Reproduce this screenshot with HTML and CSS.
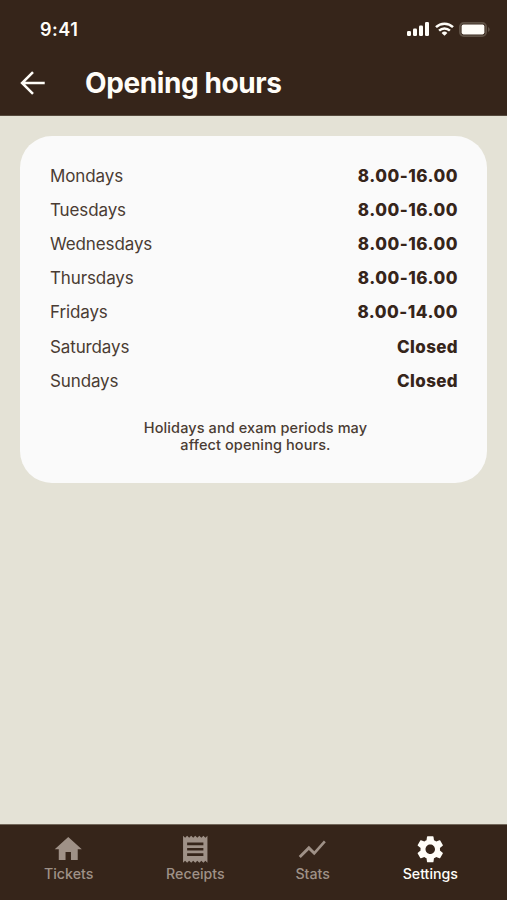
FILE: index.html
```html
<!DOCTYPE html>
<html lang="en">
<head>
<meta charset="utf-8">
<title>Opening hours</title>
<link rel="stylesheet" href="styles.css">
</head>
<body>
<div class="screen">
  <header class="header">
    <div class="status">
      <span class="time">9:41</span>
      <div class="indicators">
        <svg width="22" height="14" viewBox="0 0 22 14" fill="#fffdf8"><rect x="0" y="9" width="4" height="5" rx="1.2"/><rect x="6" y="6.5" width="4" height="7.5" rx="1.2"/><rect x="12" y="3.5" width="4" height="10.5" rx="1.2"/><rect x="18" y="0" width="4" height="14" rx="1.2"/></svg>
        <svg width="19" height="14" viewBox="0 0 19 14" fill="none" stroke="#fffdf8" stroke-width="2.5"><path d="M1 5.1a12.2 12.2 0 0 1 17 0M4.1 8.6a7.8 7.8 0 0 1 10.8 0"/><path d="M9.5 13.8 6.6 10.9a4.2 4.2 0 0 1 5.8 0z" fill="#fffdf8" stroke="none"/></svg>
        <svg width="31" height="15" viewBox="0 0 31 15"><rect x=".9" y=".9" width="26.2" height="13.2" rx="3.8" fill="none" stroke="#5f5145" stroke-width="1.8"/><rect x="2.6" y="2.6" width="22.8" height="9.8" rx="1.8" fill="#fffdf8"/><path d="M29 5v5a2.7 2.7 0 0 0 0-5z" fill="#5f5145"/></svg>
      </div>
    </div>
    <div class="titlebar">
      <svg class="back" viewBox="0 0 24 24"><path d="M20.8 12H3.8M12 3.8 3.8 12l8.2 8.2"/></svg>
      <h1 class="title">Opening hours</h1>
    </div>
  </header>
  <main class="content">
    <section class="card">
      <dl class="hours">
        <div class="row"><dt>Mondays</dt><dd>8.00-16.00</dd></div>
        <div class="row"><dt>Tuesdays</dt><dd>8.00-16.00</dd></div>
        <div class="row"><dt>Wednesdays</dt><dd>8.00-16.00</dd></div>
        <div class="row"><dt>Thursdays</dt><dd>8.00-16.00</dd></div>
        <div class="row"><dt>Fridays</dt><dd>8.00-14.00</dd></div>
        <div class="row"><dt>Saturdays</dt><dd class="closed">Closed</dd></div>
        <div class="row"><dt>Sundays</dt><dd class="closed">Closed</dd></div>
      </dl>
      <p class="note">Holidays and exam periods may<br>affect opening hours.</p>
    </section>
  </main>
  <nav class="nav">
    <a class="tab"><svg viewBox="0 0 24 24"><path d="M10 20v-6h4v6h5v-8h3L12 3 2 12h3v8z"/></svg><span>Tickets</span></a>
    <a class="tab"><svg viewBox="0 0 24 24"><path d="M18 17H6v-2h12v2zm0-4H6v-2h12v2zm0-4H6V7h12v2zM3 22l1.5-1.5L6 22l1.5-1.5L9 22l1.5-1.5L12 22l1.5-1.5L15 22l1.5-1.5L18 22l1.5-1.5L21 22V2l-1.5 1.5L18 2l-1.5 1.5L15 2l-1.5 1.5L12 2l-1.5 1.5L9 2 7.5 3.5 6 2 4.5 3.5 3 2v20z"/></svg><span>Receipts</span></a>
    <a class="tab"><svg viewBox="0 0 24 24"><path d="M3.5 18.49l6-6.01 4 4L22 6.92l-1.41-1.41-7.09 7.97-4-4L2 16.99z"/></svg><span>Stats</span></a>
    <a class="tab active"><svg viewBox="0 0 24 24"><path d="M19.14 12.94c.04-.3.06-.61.06-.94 0-.32-.02-.64-.07-.94l2.03-1.58c.18-.14.23-.41.12-.61l-1.92-3.32c-.12-.22-.37-.29-.59-.22l-2.39.96c-.5-.38-1.03-.7-1.62-.94l-.36-2.54c-.04-.24-.24-.41-.48-.41h-3.84c-.24 0-.43.17-.47.41l-.36 2.54c-.59.24-1.13.57-1.62.94l-2.39-.96c-.22-.08-.47 0-.59.22L2.74 8.87c-.12.21-.08.47.12.61l2.03 1.58c-.05.3-.09.63-.09.94s.02.64.07.94l-2.03 1.58c-.18.14-.23.41-.12.61l1.92 3.32c.12.22.37.29.59.22l2.39-.96c.5.38 1.03.7 1.62.94l.36 2.54c.05.24.24.41.48.41h3.84c.24 0 .44-.17.47-.41l.36-2.54c.59-.24 1.13-.56 1.62-.94l2.39.96c.22.08.47 0 .59-.22l1.92-3.32c.12-.22.07-.47-.12-.61l-2.01-1.58zM12 15.5c-1.93 0-3.5-1.57-3.5-3.5s1.57-3.5 3.5-3.5 3.5 1.57 3.5 3.5-1.57 3.5-3.5 3.5z"/></svg><span>Settings</span></a>
  </nav>
</div>
</body>
</html>
```
FILE: styles.css
```css
* { box-sizing: border-box; margin: 0; padding: 0; }
body { font-family: Inter, "Liberation Sans", sans-serif; background: #e4e2d6; }
.screen { height: 900px; display: flex; flex-direction: column; overflow: hidden; }
.header { height: 116px; background: #36251a; color: #fffdf8; border-bottom: 1px solid #564a3d; }
.status { height: 49px; padding: 9px 17px 0 40px; display: flex; justify-content: space-between; align-items: center; }
.time { font-size: 18px; font-weight: 600; line-height: 22px; letter-spacing: 0.5px; padding-top: 1px; }
.indicators { display: flex; align-items: center; gap: 5.5px; }
.indicators svg { display: block; }
.titlebar { height: 67px; display: flex; align-items: center; padding-left: 17px; }
.back { width: 32px; height: 32px; fill: none; stroke: #fffdf8; stroke-width: 1.9; margin-right: 36px; }
.title { font-size: 28px; font-weight: 700; line-height: 34px; letter-spacing: -0.4px; }
.content { flex: 1; padding: 20px; }
.card { height: 347px; border-radius: 32px; background: #fafafa; padding: 22.5px 29px 0 30px; }
.row { height: 34.2px; display: flex; justify-content: space-between; align-items: center; font-size: 17px; line-height: 22px; }
dt { color: #4a3c33; letter-spacing: -0.12px; }
dd { color: #36251a; font-weight: 800; letter-spacing: 0.5px; }
.closed { letter-spacing: 0.35px; }
.note { margin-top: 21px; padding-left: 3px; text-align: center; font-size: 14.5px; line-height: 17.5px; font-weight: 500; color: #4a3c33; letter-spacing: 0.1px; }
.nav { height: 76px; padding: 8px 49px 0 44px; background: #36251a; border-top: 1px solid #72675a; display: flex; justify-content: space-between; }
.tab { display: flex; flex-direction: column; align-items: center; color: #9f9187; font-size: 14.2px; font-weight: 500; line-height: 16px; }
.tab svg { width: 32.5px; height: 32.5px; fill: currentColor; }
.tab:nth-child(3) { margin-left: -2px; }
.active { color: #fffdf8; }
```
